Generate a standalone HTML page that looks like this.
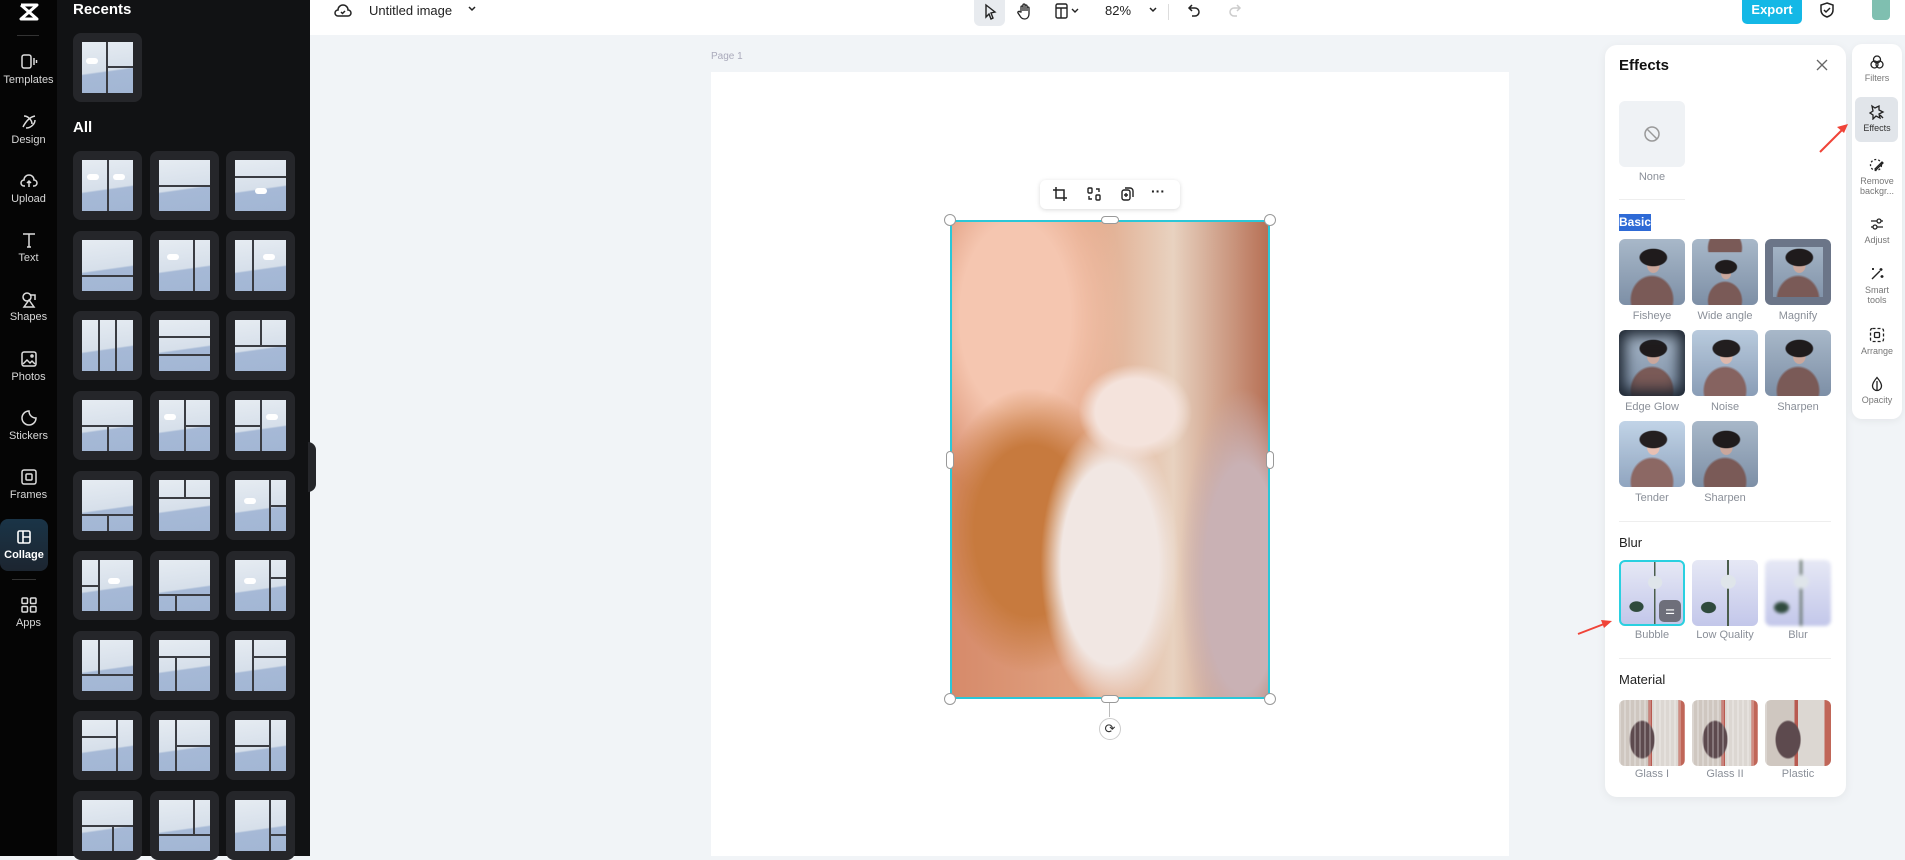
<!DOCTYPE html>
<html><head><meta charset="utf-8"><style>
*{box-sizing:border-box;margin:0;padding:0}
body{width:1905px;height:856px;overflow:hidden;position:relative;background:#f1f4f7;font-family:"Liberation Sans",sans-serif}
.a{position:absolute}
#rail{left:0;top:0;width:57px;height:856px;background:#050505}
.ri{position:absolute;left:0;width:57px;text-align:center;color:#d8d8d8;font-size:11px}
.ri svg{display:block;margin:0 auto 3px}
#panel{left:57px;top:0;width:253px;height:856px;background:#111214}
.t{position:absolute;width:69px;height:69px;background:#25262a;border-radius:8px}
.p{position:absolute;left:9px;top:9px;width:51px;height:51px;background:linear-gradient(172deg,#e6ecf2 0%,#d6dfea 55%,#a6b9d6 58%,#a2b6d4 100%);overflow:hidden}
.v{position:absolute;top:0;bottom:0;width:2px;background:#3a3c42}
.h{position:absolute;left:0;right:0;height:2px;background:#3a3c42}
.cl{position:absolute;width:12px;height:6px;background:#fff;border-radius:6px}
#top{left:310px;top:0;width:1595px;height:35px;background:#fff}
#page{left:711px;top:72px;width:798px;height:784px;background:#fff}
#eff{left:1605px;top:45px;width:241px;height:752px;background:#fff;border-radius:12px;box-shadow:0 2px 10px rgba(0,0,0,.06)}
.th{position:absolute;width:66px;height:66px;border-radius:6px;overflow:hidden}
.lb{position:absolute;width:66px;text-align:center;font-size:11px;color:#8a8f98}
.sec{position:absolute;left:14px;font-size:13px;color:#222}
.person{background:radial-gradient(ellipse 22% 14% at 52% 28%,#1f1b1c 90%,transparent 100%),radial-gradient(ellipse 10% 12% at 52% 40%,#caa79c 90%,transparent 100%),radial-gradient(ellipse 34% 38% at 50% 92%,#7a5a57 90%,transparent 100%),linear-gradient(#a8b8c9,#7d8fa6)}
.rose{background:radial-gradient(ellipse 12% 11% at 55% 33%,#dfe5ea 90%,transparent 100%),radial-gradient(ellipse 12% 9% at 25% 72%,#2f4a3d 90%,transparent 100%),linear-gradient(90deg,transparent 53%,#4b5d4c 53%,#4b5d4c 56%,transparent 56%),linear-gradient(#e6e8f5,#c3c7ea)}
.mat{background:linear-gradient(90deg,rgba(255,255,255,.25) 0 2px,transparent 2px 5px),radial-gradient(ellipse 20% 30% at 35% 60%,#5d4a4e 90%,transparent 100%),linear-gradient(90deg,#cfc7c0 0 45%,#b85a50 45% 50%,#dcd7d2 50% 90%,#c06658 90%)}
.mat{background-size:5px 100%,100% 100%,100% 100%}
#tools{left:1852px;top:44px;width:50px;height:375px;background:#fff;border-radius:10px;box-shadow:0 2px 8px rgba(0,0,0,.06)}
.ti{position:absolute;left:0;width:50px;text-align:center;font-size:9px;color:#777;line-height:10px}
.ti svg{display:block;margin:0 auto 3px}
.hd{position:absolute;width:12px;height:12px;border-radius:50%;background:#fff;border:1px solid #999}
</style></head><body>

<div id="rail" class="a">
 <div class="ri" style="top:2px"><svg width="22" height="20" viewBox="0 0 22 20"><path d="M3 3h16L3 17h16L3 3" fill="none" stroke="#fff" stroke-width="3" stroke-linejoin="round"/></svg></div>
 <div class="a" style="left:17px;top:35px;width:22px;height:1px;background:#333"></div>
 <div class="ri" style="top:53px"><svg width="18" height="18" viewBox="0 0 18 18" fill="none" stroke="#ddd" stroke-width="1.5"><rect x="2" y="2" width="9" height="13" rx="2"/><path d="M14 5v7M16.5 7v3"/></svg>Templates</div>
 <div class="ri" style="top:113px"><svg width="18" height="18" viewBox="0 0 18 18" fill="none" stroke="#ddd" stroke-width="1.5"><path d="M4 3c4 0 8 4 8 8M3 14c3-6 7-10 12-11M6 15c5 0 9-4 9-8"/></svg>Design</div>
 <div class="ri" style="top:172px"><svg width="18" height="18" viewBox="0 0 18 18" fill="none" stroke="#ddd" stroke-width="1.5"><path d="M5 14H4a3 3 0 010-6 5 5 0 0110 0 3 3 0 010 6h-1M9 15V9M7 11l2-2 2 2"/></svg>Upload</div>
 <div class="ri" style="top:231px"><svg width="18" height="18" viewBox="0 0 18 18" fill="none" stroke="#ddd" stroke-width="1.5"><path d="M3 3h12M9 3v13M7 16h4"/></svg>Text</div>
 <div class="ri" style="top:290px"><svg width="18" height="18" viewBox="0 0 18 18" fill="none" stroke="#ddd" stroke-width="1.5"><circle cx="7" cy="7" r="4"/><path d="M10 5h5v5M9 10l-5 7h10z"/></svg>Shapes</div>
 <div class="ri" style="top:350px"><svg width="18" height="18" viewBox="0 0 18 18" fill="none" stroke="#ddd" stroke-width="1.5"><rect x="2" y="2" width="14" height="14" rx="2"/><path d="M3 14l4-4 3 3 2-2 3 3"/><circle cx="12" cy="6" r="1"/></svg>Photos</div>
 <div class="ri" style="top:409px"><svg width="18" height="18" viewBox="0 0 18 18" fill="none" stroke="#ddd" stroke-width="1.5"><path d="M16 9a7 7 0 11-7-7c0 4 3 7 7 7z"/></svg>Stickers</div>
 <div class="ri" style="top:468px"><svg width="18" height="18" viewBox="0 0 18 18" fill="none" stroke="#ddd" stroke-width="1.5"><rect x="2" y="2" width="14" height="14" rx="2"/><rect x="6" y="6" width="6" height="6" rx="1"/></svg>Frames</div>
 <div class="a" style="left:0;top:519px;width:48px;height:52px;border-radius:8px;background:linear-gradient(#1a3447,#1c2530)"></div>
 <div class="ri" style="top:528px;color:#fff;font-weight:bold;width:48px"><svg width="18" height="18" viewBox="0 0 18 18" fill="none" stroke="#fff" stroke-width="1.6"><rect x="3" y="3" width="12" height="12" rx="1.5"/><path d="M8 3v12M8 9h7"/></svg>Collage</div>
 <div class="a" style="left:12px;top:579px;width:24px;height:1px;background:#333"></div>
 <div class="ri" style="top:596px"><svg width="18" height="18" viewBox="0 0 18 18" fill="none" stroke="#ddd" stroke-width="1.5"><rect x="2" y="2" width="5.5" height="5.5" rx="1"/><rect x="10.5" y="2" width="5.5" height="5.5" rx="1"/><rect x="2" y="10.5" width="5.5" height="5.5" rx="1"/><rect x="10.5" y="10.5" width="5.5" height="5.5" rx="1"/></svg>Apps</div>
</div>

<div id="panel" class="a">
 <div class="a" style="left:16px;top:1px;color:#fff;font-weight:bold;font-size:15px">Recents</div>
 <div class="t" style="left:16px;top:33px"><div class="p"><div class="v" style="left:24px"></div><div class="h" style="left:24px;top:24px"></div><div class="cl" style="left:4px;top:16px"></div></div></div>
 <div class="a" style="left:16px;top:119px;color:#fff;font-weight:bold;font-size:15px">All</div>
 <div class="t" style="left:16px;top:151px"><div class="p"><div class="v" style="left:25px"></div><div class="cl" style="left:5px;top:14px"></div><div class="cl" style="left:31px;top:14px"></div></div></div>
 <div class="t" style="left:93px;top:151px"><div class="p"><div class="h" style="top:25px"></div></div></div>
 <div class="t" style="left:169px;top:151px"><div class="p"><div class="h" style="top:16px"></div><div class="cl" style="left:20px;top:28px"></div></div></div>
 <div class="t" style="left:16px;top:231px"><div class="p"><div class="h" style="top:35px"></div></div></div>
 <div class="t" style="left:93px;top:231px"><div class="p"><div class="v" style="left:34px"></div><div class="cl" style="left:8px;top:14px"></div></div></div>
 <div class="t" style="left:169px;top:231px"><div class="p"><div class="v" style="left:17px"></div><div class="cl" style="left:28px;top:14px"></div></div></div>
 <div class="t" style="left:16px;top:311px"><div class="p"><div class="v" style="left:16px"></div><div class="v" style="left:33px"></div></div></div>
 <div class="t" style="left:93px;top:311px"><div class="p"><div class="h" style="top:16px"></div><div class="h" style="top:34px"></div></div></div>
 <div class="t" style="left:169px;top:311px"><div class="p"><div class="h" style="top:25px"></div><div class="v" style="left:25px;bottom:26px"></div></div></div>
 <div class="t" style="left:16px;top:391px"><div class="p"><div class="h" style="top:25px"></div><div class="v" style="left:25px;top:25px"></div></div></div>
 <div class="t" style="left:93px;top:391px"><div class="p"><div class="v" style="left:25px"></div><div class="h" style="left:25px;top:25px"></div><div class="cl" style="left:5px;top:14px"></div></div></div>
 <div class="t" style="left:169px;top:391px"><div class="p"><div class="v" style="left:25px"></div><div class="h" style="right:26px;top:25px"></div><div class="cl" style="left:31px;top:14px"></div></div></div>
 <div class="t" style="left:16px;top:471px"><div class="p"><div class="h" style="top:34px"></div><div class="v" style="left:25px;top:34px"></div></div></div>
 <div class="t" style="left:93px;top:471px"><div class="p"><div class="h" style="top:17px"></div><div class="v" style="left:25px;bottom:34px"></div></div></div>
 <div class="t" style="left:169px;top:471px"><div class="p"><div class="v" style="left:34px"></div><div class="h" style="left:34px;top:25px"></div><div class="cl" style="left:9px;top:18px"></div></div></div>
 <div class="t" style="left:16px;top:551px"><div class="p"><div class="v" style="left:16px"></div><div class="h" style="right:35px;top:25px"></div><div class="cl" style="left:26px;top:18px"></div></div></div>
 <div class="t" style="left:93px;top:551px"><div class="p"><div class="h" style="top:34px"></div><div class="v" style="left:16px;top:34px"></div></div></div>
 <div class="t" style="left:169px;top:551px"><div class="p"><div class="v" style="left:34px"></div><div class="h" style="left:34px;top:17px"></div><div class="cl" style="left:9px;top:18px"></div></div></div>
 <div class="t" style="left:16px;top:631px"><div class="p"><div class="h" style="top:34px"></div><div class="v" style="left:16px;bottom:17px"></div></div></div>
 <div class="t" style="left:93px;top:631px"><div class="p"><div class="h" style="top:16px"></div><div class="v" style="left:16px;top:16px"></div></div></div>
 <div class="t" style="left:169px;top:631px"><div class="p"><div class="v" style="left:17px"></div><div class="h" style="left:17px;top:16px"></div></div></div>
 <div class="t" style="left:16px;top:711px"><div class="p"><div class="v" style="left:34px"></div><div class="h" style="right:17px;top:16px"></div></div></div>
 <div class="t" style="left:93px;top:711px"><div class="p"><div class="v" style="left:16px"></div><div class="h" style="left:16px;top:25px"></div></div></div>
 <div class="t" style="left:169px;top:711px"><div class="p"><div class="v" style="left:34px"></div><div class="h" style="right:17px;top:25px"></div></div></div>
 <div class="t" style="left:16px;top:791px"><div class="p"><div class="h" style="top:25px"></div><div class="v" style="left:30px;top:25px"></div></div></div>
 <div class="t" style="left:93px;top:791px"><div class="p"><div class="v" style="left:34px;bottom:17px"></div><div class="h" style="top:34px"></div></div></div>
 <div class="t" style="left:169px;top:791px"><div class="p"><div class="v" style="left:34px"></div><div class="h" style="left:34px;top:34px"></div></div></div>
</div>
<div class="a" style="left:308px;top:442px;width:8px;height:50px;background:#25262a;border-radius:0 8px 8px 0"></div>

<div id="top" class="a">
 <svg class="a" style="left:24px;top:2px" width="18" height="18" viewBox="0 0 18 18" fill="none" stroke="#222" stroke-width="1.5"><path d="M5 14H4a3 3 0 010-6 5 5 0 0110 0 3 3 0 010 6H5z"/><path d="M7 10l1.5 1.5L11 9"/></svg>
 <div class="a" style="left:59px;top:3px;font-size:13px;color:#222">Untitled image</div>
 <svg class="a" style="left:157px;top:5px" width="10" height="8" viewBox="0 0 10 8"><path d="M2 2l3 3 3-3" fill="none" stroke="#222" stroke-width="1.5"/></svg>
 <div class="a" style="left:664px;top:0;width:31px;height:26px;background:#e8ebef;border-radius:0 0 6px 6px"></div>
 <svg class="a" style="left:672px;top:3px" width="16" height="18" viewBox="0 0 16 18"><path d="M4 2l9 7-4 1 2 5-2 1-2-5-3 3z" fill="none" stroke="#222" stroke-width="1.4"/></svg>
 <svg class="a" style="left:707px;top:2px" width="16" height="18" viewBox="0 0 16 18"><path d="M4 10V5a1 1 0 012 0v4V3a1 1 0 012 0v6V4a1 1 0 012 0v5-3a1 1 0 012 0v6c0 3-2 5-4 5s-4-1-5-3l-2-3a1 1 0 012-1z" fill="none" stroke="#222" stroke-width="1.3"/></svg>
 <svg class="a" style="left:745px;top:3px" width="28" height="16" viewBox="0 0 28 16"><rect x="1" y="1" width="11" height="14" rx="1.5" fill="none" stroke="#222" stroke-width="1.4"/><path d="M1 5h11M6 5v10" stroke="#222" stroke-width="1.4"/><path d="M17 6l3 3 3-3" fill="none" stroke="#222" stroke-width="1.4"/></svg>
 <div class="a" style="left:795px;top:3px;font-size:13px;color:#222">82%</div>
 <svg class="a" style="left:838px;top:6px" width="10" height="8" viewBox="0 0 10 8"><path d="M2 2l3 3 3-3" fill="none" stroke="#222" stroke-width="1.5"/></svg>
 <div class="a" style="left:858px;top:4px;width:1px;height:16px;background:#ddd"></div>
 <svg class="a" style="left:877px;top:2px" width="16" height="18" viewBox="0 0 16 18"><path d="M5 3L2 6l3 3M2 6h6a4 4 0 010 8H5" fill="none" stroke="#222" stroke-width="1.5"/></svg>
 <svg class="a" style="left:916px;top:2px" width="16" height="18" viewBox="0 0 16 18"><path d="M11 3l3 3-3 3M14 6H8a4 4 0 000 8h3" fill="none" stroke="#ccc" stroke-width="1.5"/></svg>
 <div class="a" style="left:1432px;top:0;width:60px;height:24px;background:#14b8e6;border-radius:0 0 5px 5px;color:#fff;font-weight:bold;font-size:13px;text-align:center;line-height:20px">Export</div>
 <svg class="a" style="left:1508px;top:1px" width="18" height="18" viewBox="0 0 18 18" fill="none" stroke="#222" stroke-width="1.5"><path d="M9 2l6 2v5c0 4-3 6-6 7-3-1-6-3-6-7V4z"/><path d="M6 9l2 2 4-4"/></svg>
 <div class="a" style="left:1562px;top:0;width:18px;height:20px;background:#7fbfb0;border-radius:0 0 4px 4px"></div>
</div>

<div class="a" style="left:711px;top:51px;font-size:10px;color:#aab"> Page 1</div>
<div id="page" class="a"></div>

<div class="a" style="left:1040px;top:180px;width:140px;height:29px;background:#fff;border-radius:6px;box-shadow:0 1px 5px rgba(0,0,0,.15)">
 <svg class="a" style="left:12px;top:6px" width="16" height="16" viewBox="0 0 16 16" fill="none" stroke="#222" stroke-width="1.5"><path d="M4 1v11h11M1 4h11v11"/></svg>
 <svg class="a" style="left:46px;top:6px" width="16" height="16" viewBox="0 0 16 16" fill="none" stroke="#222" stroke-width="1.4"><rect x="2" y="2" width="4" height="5" rx="1"/><rect x="10" y="9" width="4" height="5" rx="1"/><path d="M10 3h3v3M6 13H3v-3"/></svg>
 <svg class="a" style="left:79px;top:6px" width="16" height="16" viewBox="0 0 16 16" fill="none" stroke="#222" stroke-width="1.4"><rect x="3" y="4" width="8" height="10" rx="2"/><path d="M6 2h5a3 3 0 013 3v6M7 7v4M5 9h4"/></svg>
 <div class="a" style="left:111px;top:3px;font-size:14px;font-weight:bold;color:#222">···</div>
</div>

<div class="a" style="left:950px;top:220px;width:320px;height:479px;border:2px solid #2ac7d8;overflow:hidden;background:
 radial-gradient(ellipse 18% 10% at 58% 40%,#f4e3dc 70%,transparent 100%),
 radial-gradient(ellipse 22% 30% at 50% 72%,#f1e7e3 70%,transparent 100%),
 radial-gradient(ellipse 30% 30% at 25% 65%,#c77a3e 60%,transparent 100%),
 radial-gradient(ellipse 20% 40% at 92% 75%,#c9b1b4 60%,transparent 100%),
 radial-gradient(ellipse 35% 40% at 20% 20%,#f5c6b0 50%,transparent 100%),
 linear-gradient(90deg,#d68a6a 0%,#e0a180 40%,#e8d2c0 70%,#b77055 100%)"></div>
<div class="hd" style="left:944px;top:214px"></div><div class="hd" style="left:1264px;top:214px"></div>
<div class="hd" style="left:944px;top:693px"></div><div class="hd" style="left:1264px;top:693px"></div>
<div class="a" style="left:1101px;top:216px;width:18px;height:8px;background:#fff;border:1px solid #999;border-radius:4px"></div>
<div class="a" style="left:1101px;top:695px;width:18px;height:8px;background:#fff;border:1px solid #999;border-radius:4px"></div>
<div class="a" style="left:946px;top:451px;width:8px;height:18px;background:#fff;border:1px solid #999;border-radius:4px"></div>
<div class="a" style="left:1266px;top:451px;width:8px;height:18px;background:#fff;border:1px solid #999;border-radius:4px"></div>
<div class="a" style="left:1109px;top:703px;width:1px;height:14px;background:#bbb"></div>
<div class="a" style="left:1099px;top:718px;width:22px;height:22px;border-radius:50%;background:#fff;border:1px solid #ccc;text-align:center;line-height:20px;font-size:13px;color:#333">⟳</div>

<div id="eff" class="a">
 <div class="a" style="left:14px;top:12px;font-size:15px;font-weight:bold;color:#111">Effects</div>
 <svg class="a" style="left:210px;top:13px" width="14" height="14" viewBox="0 0 14 14"><path d="M2 2l10 10M12 2L2 12" stroke="#666" stroke-width="1.3"/></svg>
 <div class="th" style="left:14px;top:56px;background:#eff2f5"><svg class="a" style="left:24px;top:24px" width="18" height="18" viewBox="0 0 18 18" fill="none" stroke="#999" stroke-width="1.5"><circle cx="9" cy="9" r="7"/><path d="M4 4l10 10"/></svg></div>
 <div class="lb" style="left:14px;top:126px">None</div>
 <div class="a" style="left:14px;top:154px;width:66px;height:1px;background:#eee"></div>
 <div class="a" style="left:14px;top:169px;background:#2e6ad6;color:#fff;font-weight:bold;font-size:12px;padding:1px 0;line-height:15px">Basic</div>
 <div class="th person" style="left:14px;top:194px"></div><div class="lb" style="left:14px;top:265px">Fisheye</div>
 <div class="th person" style="left:87px;top:194px;background-size:80% 80%,80% 80%,80% 80%,100% 100%;background-position:center bottom"></div><div class="lb" style="left:87px;top:265px">Wide angle</div>
 <div class="th person" style="left:160px;top:194px;box-shadow:inset 0 0 0 8px #6b7588"></div><div class="lb" style="left:160px;top:265px">Magnify</div>
 <div class="th person" style="left:14px;top:285px;box-shadow:inset 0 0 14px 6px #1d2530"></div><div class="lb" style="left:14px;top:356px">Edge Glow</div>
 <div class="th person" style="left:87px;top:285px;filter:brightness(1.1)"></div><div class="lb" style="left:87px;top:356px">Noise</div>
 <div class="th person" style="left:160px;top:285px"></div><div class="lb" style="left:160px;top:356px">Sharpen</div>
 <div class="th person" style="left:14px;top:376px;filter:brightness(1.15)"></div><div class="lb" style="left:14px;top:447px">Tender</div>
 <div class="th person" style="left:87px;top:376px"></div><div class="lb" style="left:87px;top:447px">Sharpen</div>
 <div class="a" style="left:14px;top:476px;width:212px;height:1px;background:#eee"></div>
 <div class="sec" style="top:490px">Blur</div>
 <div class="th rose" style="left:14px;top:515px;border:2px solid #2ad0e0"><div class="a" style="left:38px;top:38px;width:22px;height:22px;background:#6e6f7a;border-radius:5px;color:#fff;font-size:11px;text-align:center;line-height:22px">⚌</div></div><div class="lb" style="left:14px;top:584px">Bubble</div>
 <div class="th rose" style="left:87px;top:515px"></div><div class="lb" style="left:87px;top:584px">Low Quality</div>
 <div class="th rose" style="left:160px;top:515px;filter:blur(1.5px)"></div><div class="lb" style="left:160px;top:584px">Blur</div>
 <div class="a" style="left:14px;top:613px;width:212px;height:1px;background:#eee"></div>
 <div class="sec" style="top:627px">Material</div>
 <div class="th mat" style="left:14px;top:655px"></div><div class="lb" style="left:14px;top:723px">Glass I</div>
 <div class="th mat" style="left:87px;top:655px"></div><div class="lb" style="left:87px;top:723px">Glass II</div>
 <div class="th mat" style="left:160px;top:655px;background-size:100% 100%"></div><div class="lb" style="left:160px;top:723px">Plastic</div>
</div>

<div id="tools" class="a">
 <div class="ti" style="top:10px"><svg width="16" height="16" viewBox="0 0 16 16" fill="none" stroke="#222" stroke-width="1.3"><circle cx="8" cy="5.5" r="3.5"/><circle cx="5.5" cy="10.5" r="3.5"/><circle cx="10.5" cy="10.5" r="3.5"/></svg>Filters</div>
 <div class="a" style="left:3px;top:53px;width:43px;height:45px;background:#e1e5ea;border-radius:6px"></div>
 <div class="ti" style="top:60px;color:#333"><svg width="16" height="16" viewBox="0 0 16 16" fill="none" stroke="#222" stroke-width="1.3"><path d="M3 2l3 2 4-2 0 4 4 2-4 2 1 4-4-2-3 3 0-4-3-2 3-2z"/><path d="M11 11l3 3"/></svg>Effects</div>
 <div class="ti" style="top:113px"><svg width="16" height="16" viewBox="0 0 16 16" fill="none" stroke="#222" stroke-width="1.3"><circle cx="7" cy="8" r="5.5" stroke-dasharray="2 2"/><path d="M6 12l7-7 1 1-7 7z"/></svg>Remove<br>backgr...</div>
 <div class="ti" style="top:172px"><svg width="16" height="16" viewBox="0 0 16 16" fill="none" stroke="#222" stroke-width="1.3"><path d="M2 5h12M2 11h12"/><circle cx="10" cy="5" r="2" fill="#fff"/><circle cx="6" cy="11" r="2" fill="#fff"/></svg>Adjust</div>
 <div class="ti" style="top:222px"><svg width="16" height="16" viewBox="0 0 16 16" fill="none" stroke="#222" stroke-width="1.4"><path d="M3 13l8-8M12 2v3M10.5 3.5h3M13 9v3M11.5 10.5h3M4 2v2M3 3h2"/></svg>Smart<br>tools</div>
 <div class="ti" style="top:283px"><svg width="16" height="16" viewBox="0 0 16 16" fill="none" stroke="#222" stroke-width="1.3"><rect x="1.5" y="1.5" width="13" height="13" rx="2" stroke-dasharray="3 2"/><rect x="5.5" y="5.5" width="5" height="5" rx="1"/></svg>Arrange</div>
 <div class="ti" style="top:332px"><svg width="16" height="16" viewBox="0 0 16 16" fill="none" stroke="#222" stroke-width="1.3"><path d="M8 1.5C5 5 3.5 7.5 3.5 10a4.5 4.5 0 009 0C12.5 7.5 11 5 8 1.5z"/><path d="M8 5v9" /></svg>Opacity</div>
</div>

<svg class="a" style="left:0;top:0" width="1905" height="856" viewBox="0 0 1905 856">
 <path d="M1820 152L1842 130" stroke="#f04438" stroke-width="2"/><path d="M1848 124l-11 3 7 6z" fill="#f04438"/>
 <path d="M1578 634L1604 624" stroke="#f04438" stroke-width="2"/><path d="M1612 621l-11-1 3 8z" fill="#f04438"/>
</svg>
</body></html>
